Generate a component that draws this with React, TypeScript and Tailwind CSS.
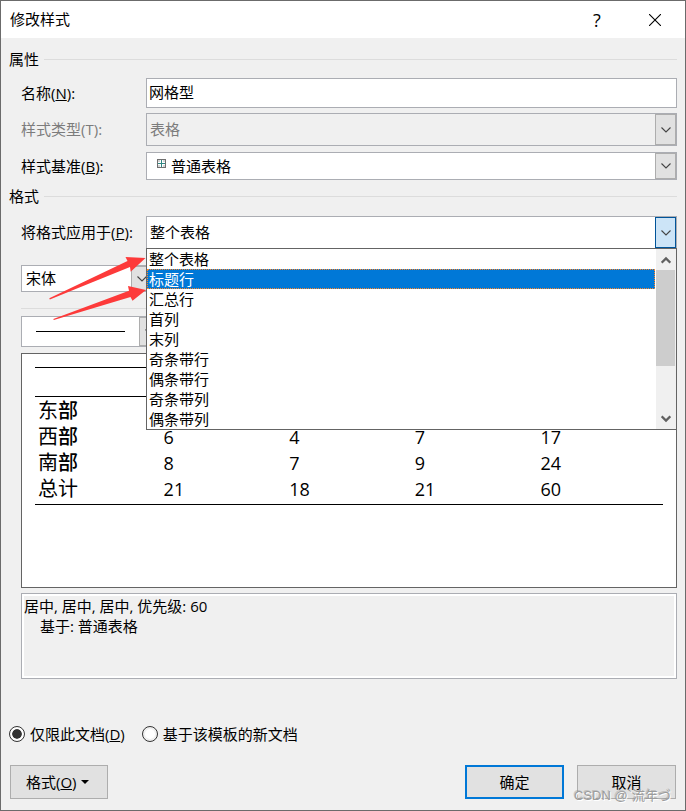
import type { ReactNode } from "react";

const applyOptions = [
    "整个表格",
    "标题行",
    "汇总行",
    "首列",
    "末列",
    "奇条带行",
    "偶条带行",
    "奇条带列",
    "偶条带列",
];

const previewRows = [
    { first: "东", second: "部", heavy: true, values: ["", "", "", ""] },
    { first: "西", second: "部", heavy: true, values: ["6", "4", "7", "17"] },
    { first: "南", second: "部", heavy: true, values: ["8", "7", "9", "24"] },
    { first: "总", second: "计", heavy: false, values: ["21", "18", "21", "60"] },
];

function Chevron() {
    return (
        <svg width="10" height="6" viewBox="0 0 10 6" fill="none" stroke="#444" strokeWidth="1.1">
            <path d="M0.5 0.5 L5 5 L9.5 0.5" />
        </svg>
    );
}

function ScrollArrow({ down = false }: { down?: boolean }) {
    return (
        <svg width="10" height="8" viewBox="0 0 10 8" fill="none" stroke="#606060" strokeWidth="2.2">
            <path d={down ? "M0.7 1.3 L5 5.6 L9.3 1.3" : "M0.7 6.7 L5 2.4 L9.3 6.7"} />
        </svg>
    );
}

function SectionTitle({ children }: { children: ReactNode }) {
    return (
        <div className="flex h-5 items-center gap-[5px]">
            <h2>{children}</h2>
            <div className="h-px flex-1 bg-[#dcdcdc]" />
        </div>
    );
}

type DropDownProps = {
    id?: string;
    label?: string;
    value: string;
    className: string;
    selectClass?: string;
    arrowClass?: string;
    disabled?: boolean;
    children?: ReactNode;
};

function DropDown({
    id,
    label,
    value,
    className,
    selectClass = "pl-[3px]",
    arrowClass = "border-[#adadad] bg-[#e1e1e1]",
    disabled,
    children,
}: DropDownProps) {
    return (
        <div className={`relative border border-[#abadb3] ${className}`}>
            <select
                id={id}
                aria-label={label}
                disabled={disabled}
                className={`h-full w-full appearance-none bg-transparent pr-6 pb-px outline-none disabled:opacity-100 ${selectClass}`}
            >
                <option>{value}</option>
            </select>
            {children}
            <span
                className={`pointer-events-none absolute inset-y-0 right-0 flex w-[21px] items-center justify-center border ${arrowClass}`}
            >
                <Chevron />
            </span>
        </div>
    );
}

function Field({ id, label, hotkey, className = "", children }: {
    id: string;
    label: string;
    hotkey: ReactNode;
    className?: string;
    children: ReactNode;
}) {
    return (
        <div className={`flex items-center pl-3 ${className}`}>
            <label htmlFor={id} className="w-[125px] shrink-0 pb-px whitespace-nowrap">
                {label}({hotkey}):
            </label>
            {children}
        </div>
    );
}

function ApplyList() {
    return (
        <div className="absolute inset-x-0 top-8 z-10 flex h-[182px] border border-[#646464] bg-white">
            <ul role="listbox" aria-label="将格式应用于" className="flex-1 overflow-hidden pr-px">
                {applyOptions.map((option, index) => (
                    <li
                        key={option}
                        role="option"
                        aria-selected={index === 1}
                        className={
                            index === 1
                                ? "flex h-5 items-center border border-dotted border-[#ff8728] bg-[#0078d7] pl-px text-white"
                                : "flex h-5 items-center pl-0.5"
                        }
                    >
                        {option}
                    </li>
                ))}
            </ul>
            <div className="flex w-5 flex-col bg-[#f0f0f0]">
                <div className="flex h-[21px] items-center justify-center">
                    <ScrollArrow />
                </div>
                <div className="mr-px h-24 bg-[#cdcdcd]" />
                <div className="mt-auto flex h-[21px] items-center justify-center">
                    <ScrollArrow down />
                </div>
            </div>
        </div>
    );
}

function Radio({ label, checked, children }: { label: string; checked?: boolean; children?: ReactNode }) {
    return (
        <label className="flex items-center gap-[5px]">
            <input
                type="radio"
                name="scope"
                defaultChecked={checked}
                className="size-4 appearance-none rounded-full border border-[#333] bg-white bg-clip-content p-0.5 checked:bg-[#333] checked:shadow-[inset_0_0_0_2px_white]"
            />
            <span>{label}{children}</span>
        </label>
    );
}

export default function App() {
    return (
        <main className="relative flex min-h-screen w-full flex-col border border-[#6b6b6b] bg-[#f0f0f0] font-['Open_Sans','Noto_Sans_CJK_SC',sans-serif] text-[15px] leading-5 text-black">
            <header className="flex h-[37px] items-center bg-white pl-[9px]">
                <h1 className="flex-1 pb-px">修改样式</h1>
                <button type="button" aria-label="帮助" className="flex h-full w-14 items-center justify-center text-lg">
                    ?
                </button>
                <button type="button" aria-label="关闭" className="flex h-full w-[60px] items-center justify-center">
                    <svg width="12" height="12" viewBox="0 0 12 12" stroke="#000" strokeWidth="1.1">
                        <path d="M0 0 L12 12 M12 0 L0 12" />
                    </svg>
                </button>
            </header>

            <form className="flex flex-1 flex-col px-2 pt-[11px] pb-[11px]">
                <SectionTitle>属性</SectionTitle>
                <Field id="name" label="名称" hotkey={<u>N</u>} className="mt-[9px]">
                    <input
                        id="name"
                        defaultValue="网格型"
                        className="h-[30px] min-w-0 flex-1 border border-[#abadb3] bg-white px-0.5 pb-1 outline-none"
                    />
                </Field>
                <Field id="type" label="样式类型" hotkey="T" className="mt-[5px] text-[#7c7c7c]">
                    <DropDown id="type" value="表格" disabled className="h-[33px] flex-1" />
                </Field>
                <Field id="base" label="样式基准" hotkey={<u>B</u>} className="mt-1.5">
                    <DropDown id="base" value="普通表格" className="h-7 flex-1 bg-white" selectClass="pl-6">
                        <svg className="absolute top-1.5 left-2.5" width="9" height="9" viewBox="0 0 9 9">
                            <rect x="0.5" y="0.5" width="8" height="8" fill="#d4d4d4" stroke="#6f6f6f" />
                            <path d="M4.5 1 V8 M1 4.5 H8" stroke="#fff" strokeWidth="3" />
                            <path d="M4.5 1 V8 M1 4.5 H8" stroke="#2f8783" />
                        </svg>
                    </DropDown>
                </Field>

                <div className="mt-1.5">
                    <SectionTitle>格式</SectionTitle>
                </div>
                <Field id="apply" label="将格式应用于" hotkey={<u>P</u>} className="mt-2.5">
                    <div className="relative flex-1">
                        <DropDown
                            id="apply"
                            value="整个表格"
                            className="h-[33px] bg-white"
                            arrowClass="border-[#005499] bg-[#cce4f7]"
                        />
                        <ApplyList />
                    </div>
                </Field>

                <div className="flex flex-col pl-3">
                    <DropDown label="字体" value="宋体" className="mt-4 h-[27px] w-[132px] bg-white" selectClass="pl-1" />
                    <div className="mt-4 h-px bg-[#dcdcdc]" />
                    <DropDown label="线型" value="" className="mt-[7px] h-[31px] w-[140px] bg-white">
                        <span className="pointer-events-none absolute top-3.5 right-[35px] left-3.5 h-px bg-black" />
                    </DropDown>

                    <div className="mt-1.5 h-[235px] border border-[#646464] bg-white px-[13px] pt-[13px]">
                        <table className="w-full table-fixed border-collapse text-[18px]">
                            <thead>
                                <tr className="h-[29px] border-y border-black">
                                    <th colSpan={5} />
                                </tr>
                            </thead>
                            <tbody className="border-b border-black">
                                {previewRows.map((row) => (
                                    <tr key={row.first} className="h-[26px] align-top last:h-[29px]">
                                        <th scope="row" className="p-0 pt-0.5 pl-[3px] text-left text-[20px] leading-6 font-normal">
                                            {row.first}
                                            <span className={row.heavy ? "font-medium" : ""}>{row.second}</span>
                                        </th>
                                        {row.values.map((value, index) => (
                                            <td key={index} className="p-0 pt-0.5 pl-[3px] leading-6">
                                                {value}
                                            </td>
                                        ))}
                                    </tr>
                                ))}
                            </tbody>
                        </table>
                    </div>

                    <div className="mt-[5px] h-[86px] border border-[#abadb3] bg-white p-0.5">
                        <div className="h-full bg-[#f0f0f0]">
                            <p>居中, 居中, 居中, 优先级: 60</p>
                            <p className="pl-4">基于: 普通表格</p>
                        </div>
                    </div>
                </div>

                <div className="mt-[45px] flex gap-[17px]">
                    <Radio label="仅限此文档(" checked>
                        <u>D</u>)
                    </Radio>
                    <Radio label="基于该模板的新文档" />
                </div>

                <div className="mt-[21px] flex h-[34px] gap-[13px] px-px">
                    <button
                        type="button"
                        className="mr-auto flex w-[98px] items-center gap-1 border border-[#adadad] bg-[#e1e1e1] pl-[15px]"
                    >
                        <span>格式(<u>O</u>)</span>
                        <svg width="8" height="4" viewBox="0 0 8 4">
                            <path d="M0 0 H8 L4 4 Z" />
                        </svg>
                    </button>
                    <button type="button" className="w-[99px] border-2 border-[#0078d7] bg-[#e1e1e1]">
                        确定
                    </button>
                    <button type="button" className="w-[99px] border border-[#adadad] bg-[#e1e1e1]">
                        取消
                    </button>
                </div>
            </form>

            {/* callout arrows pointing at the list entries */}
            <svg
                className="pointer-events-none absolute top-[255px] left-12 z-20"
                width="100"
                height="67"
                viewBox="49 256 100 67"
                fill="#fd3a3a"
            >
                <path d="M49.3 298.2 L127.5 261 L125.5 257 L145.5 258 L130.7 271.7 L130 267 L49.8 299.4 Z" />
                <path d="M53.3 318.9 L129 290.8 L128 286 L146 290 L132.5 300.8 L130.5 297 L53.8 320.1 Z" />
            </svg>

            <span className="pointer-events-none absolute right-3.5 bottom-1 z-20 font-['Liberation_Sans','Noto_Sans_CJK_JP',sans-serif] text-[13px] whitespace-nowrap text-[#9c9c9c] [text-shadow:1px_1px_0_#ffffff,-1px_-1px_0_#8c8c8c66]">
                CSDN @`流年づ
            </span>
        </main>
    );
}
